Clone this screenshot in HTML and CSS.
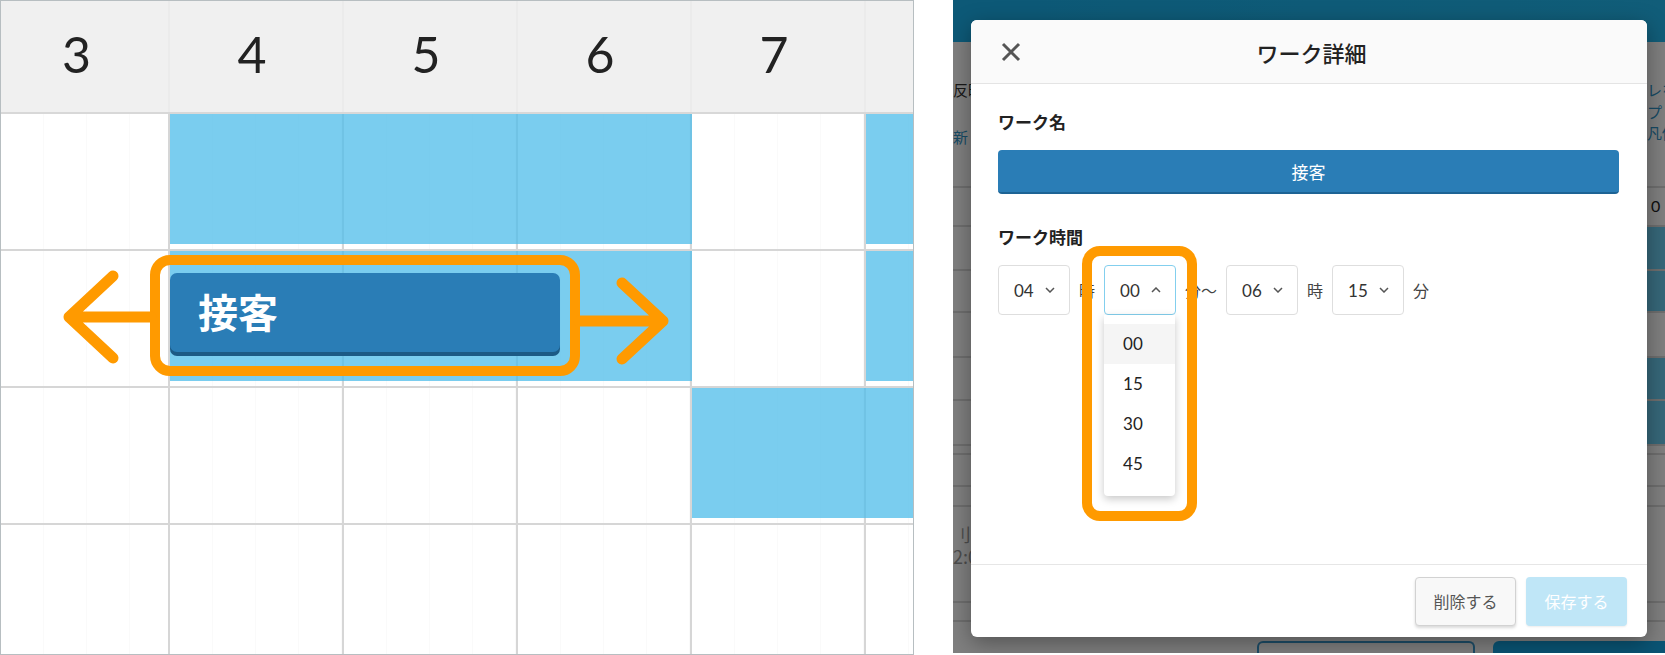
FILE: index.html
```html
<!DOCTYPE html>
<html lang="ja">
<head>
    <meta charset="utf-8" />
    <meta name="viewport" content="width=device-width, initial-scale=1" />
    <title>ワーク詳細</title>
    <link rel="stylesheet" href="styles.css">
</head>
<body>
    <div class="shot">
        <!-- left: timeline with draggable work bar -->
        <section class="timeline">
            <div class="tl-head">
                <div class="tl-hour">3</div>
                <div class="tl-hour">4</div>
                <div class="tl-hour">5</div>
                <div class="tl-hour">6</div>
                <div class="tl-hour">7</div>
                <div class="tl-hour"></div>
            </div>

            <div class="tl-row">
                <div class="cell"></div><div class="cell"></div><div class="cell"></div>
                <div class="cell"></div><div class="cell"></div><div class="cell"></div>
                <div class="shift h4-7"></div>
                <div class="shift h8"></div>
            </div>

            <div class="tl-row">
                <div class="cell"></div><div class="cell"></div><div class="cell"></div>
                <div class="cell"></div><div class="cell"></div><div class="cell"></div>
                <div class="shift h4-7">
                    <div class="work-bar">接客</div>
                </div>
                <div class="shift h8"></div>
            </div>

            <div class="tl-row">
                <div class="cell"></div><div class="cell"></div><div class="cell"></div>
                <div class="cell"></div><div class="cell"></div><div class="cell"></div>
                <div class="shift h7-9"></div>
            </div>

            <div class="tl-row">
                <div class="cell"></div><div class="cell"></div><div class="cell"></div>
                <div class="cell"></div><div class="cell"></div><div class="cell"></div>
            </div>

            <div class="callout callout-bar"></div>
            <svg class="arrows" width="912" height="653" viewBox="0 0 912 653">
                <g fill="none" stroke="#ff9a00" stroke-width="11" stroke-linecap="round" stroke-linejoin="round">
                    <path d="M150 316 H68 M112 275 L68 316 L112 357" />
                    <path d="M578 320 H662 M621 282 L662 320 L621 358" />
                </g>
            </svg>
        </section>

        <!-- right: work detail dialog -->
        <section class="dialog-shot">
            <div class="page">
                <div class="page-head"></div>
                <div class="page-intro">
                    <div class="intro-left">
                        <p class="pg-text">反映</p>
                        <p class="pg-link pg-pull">更新</p>
                    </div>
                    <div class="intro-right">
                        <p class="pg-link">レを</p>
                        <p class="pg-link">プレ</p>
                        <p class="pg-link">凡例</p>
                    </div>
                </div>
                <div class="pg-table">
                    <div class="pg-row r39"><span></span><span class="pg-num">0</span></div>
                    <div class="pg-row r44 on"><span></span><span></span></div>
                    <div class="pg-row r42 on"><span></span><span></span></div>
                    <div class="pg-row r45"><span></span><span></span></div>
                    <div class="pg-row r43 on"><span></span><span></span></div>
                    <div class="pg-row r45 on"><span></span><span></span></div>
                    <div class="pg-row r9"><span></span><span></span></div>
                    <div class="pg-row r32"><span></span><span></span></div>
                    <div class="pg-row r20"><span></span><span></span></div>
                    <div class="pg-row r96 pg-times">
                        <span>刂 :<br>2:0</span><span></span>
                    </div>
                    <div class="pg-row r19"><span></span><span></span></div>
                </div>
                <div class="pg-actions">
                    <span class="pg-btn-outline"></span>
                    <span class="pg-btn-fill"></span>
                </div>
            </div>
            <div class="backdrop"></div>

            <div class="modal">
                <header class="modal-head">
                    <button class="modal-close" aria-label="close">
                        <svg width="20" height="20" viewBox="0 0 20 20">
                            <path d="M2 2 L18 18 M18 2 L2 18" stroke="#555" stroke-width="3" />
                        </svg>
                    </button>
                    <h2 class="modal-title">ワーク詳細</h2>
                    <span></span>
                </header>

                <div class="modal-body">
                    <h3 class="field-label">ワーク名</h3>
                    <button class="work-name">接客</button>

                    <h3 class="field-label field-gap">ワーク時間</h3>
                    <div class="time-row">
                        <div class="select">
                            <span>04</span>
                            <svg width="10" height="6" viewBox="0 0 10 6"><path d="M1 1 L5 5 L9 1" fill="none" stroke="#555" stroke-width="1.5" /></svg>
                        </div>
                        <span class="unit">時</span>
                        <div class="select open">
                            <span>00</span>
                            <svg width="10" height="6" viewBox="0 0 10 6"><path d="M1 5 L5 1 L9 5" fill="none" stroke="#555" stroke-width="1.5" /></svg>
                            <ul class="menu">
                                <li class="active">00</li>
                                <li>15</li>
                                <li>30</li>
                                <li>45</li>
                            </ul>
                        </div>
                        <span class="unit">分〜</span>
                        <div class="select">
                            <span>06</span>
                            <svg width="10" height="6" viewBox="0 0 10 6"><path d="M1 1 L5 5 L9 1" fill="none" stroke="#555" stroke-width="1.5" /></svg>
                        </div>
                        <span class="unit">時</span>
                        <div class="select">
                            <span>15</span>
                            <svg width="10" height="6" viewBox="0 0 10 6"><path d="M1 1 L5 5 L9 1" fill="none" stroke="#555" stroke-width="1.5" /></svg>
                        </div>
                        <span class="unit">分</span>
                    </div>
                </div>

                <footer class="modal-foot">
                    <button class="btn btn-delete">削除する</button>
                    <button class="btn btn-save">保存する</button>
                </footer>
            </div>

            <div class="callout callout-select"></div>
        </section>
    </div>
</body>
</html>
```

FILE: styles.css
```css
* {
    margin: 0;
    padding: 0;
    box-sizing: border-box;
}

body {
    font-family: "Lato", "Noto Sans CJK JP", sans-serif;
    background: #fff;
    color: #333;
}

.shot {
    display: flex;
    width: 1665px;
    height: 655px;
}

/* ---------- timeline ---------- */

.timeline {
    position: relative;
    width: 914px;
    height: 655px;
    border: 1px solid #b7bec1;
    overflow: hidden;
    background: #fff;
}

.tl-head,
.tl-row {
    display: grid;
    grid-template-columns: 169px repeat(4, 174px) 1fr;
}

.tl-head {
    height: 113px;
    background: #f0f0f0;
    border-bottom: 2px solid #d8d8d8;
}

.tl-hour {
    display: flex;
    align-items: center;
    justify-content: center;
    padding: 0 8px 5px 0;
    font-size: 50px;
    color: #222;
    border-right: 2px solid #ebebeb;
}

.tl-hour:first-child {
    padding-right: 16px;
}

.tl-hour:last-child {
    border-right: none;
}

.tl-row {
    height: 137px;
    border-bottom: 2px solid #d6d6d6;
}

.tl-row:last-child {
    border-bottom: none;
}

.cell {
    grid-row: 1;
    border-right: 2px solid #d6d6d6;
    background: repeating-linear-gradient(90deg, transparent 0 42px, #fafafa 42px 43px);
}

.cell:nth-child(1) { grid-column: 1; }
.cell:nth-child(2) { grid-column: 2; }
.cell:nth-child(3) { grid-column: 3; }
.cell:nth-child(4) { grid-column: 4; }
.cell:nth-child(5) { grid-column: 5; }
.cell:nth-child(6) { grid-column: 6; border-right: none; }

.shift {
    grid-row: 1;
    margin-bottom: 5px;
    background: rgba(78, 188, 234, 0.75);
}

.shift.h4-7 { grid-column: 2 / 5; }
.shift.h8 { grid-column: 6 / 7; }
.shift.h7-9 { grid-column: 5 / 7; }

.work-bar {
    display: flex;
    align-items: center;
    width: 390px;
    height: 79px;
    margin-top: 22px;
    padding: 0 0 4px 28px;
    background: #2a7db6;
    border-radius: 7px;
    box-shadow: 0 4px 0 #1c5a85;
    color: #fff;
    font-size: 40px;
    font-weight: 700;
}

/* ---------- orange annotations ---------- */

.callout {
    position: absolute;
    border: 10px solid #ff9a00;
    border-radius: 20px;
    pointer-events: none;
}

.callout-bar {
    left: 149px;
    top: 254px;
    width: 430px;
    height: 121px;
}

.callout-select {
    left: 129px;
    top: 246px;
    width: 115px;
    height: 275px;
    border-radius: 18px;
}

.arrows {
    position: absolute;
    left: 0;
    top: 0;
    pointer-events: none;
}

/* ---------- dialog screenshot ---------- */

.dialog-shot {
    position: relative;
    width: 712px;
    height: 653px;
    margin-left: 39px;
    overflow: hidden;
    background: #fff;
}

.page {
    display: flex;
    flex-direction: column;
    height: 100%;
    font-family: "Noto Sans CJK JP", sans-serif;
    font-size: 15px;
}

.page-head {
    height: 42px;
    background: linear-gradient(90deg, #1ab2ee, #22bbf2);
}

.page-intro {
    display: flex;
    justify-content: space-between;
    height: 146px;
    padding-top: 38px;
    border-bottom: 2px solid #dcdcdc;
}

.intro-left p {
    line-height: 20px;
    white-space: nowrap;
}

.intro-left .pg-pull {
    margin: 27px 0 0 -15px;
}

.intro-right {
    width: 18px;
    overflow: visible;
    white-space: nowrap;
    line-height: 21.5px;
    margin-top: -1px;
}

.pg-text {
    color: #333;
}

.pg-link {
    color: #2f94c8;
}

.pg-row {
    display: grid;
    grid-template-columns: 1fr 18px;
    border-bottom: 2px solid #dcdcdc;
}

.pg-row.on span:last-child {
    background: #6ccff3;
}

.pg-num {
    padding: 8px 0 0 4px;
    color: #222;
    font-family: "Lato", sans-serif;
    font-size: 16px;
}

.pg-times span:first-child {
    padding: 16px 0 0 0;
    color: #999;
    font-size: 18px;
    line-height: 22px;
}

.r9 { height: 9px; }
.r19 { height: 19px; }
.r20 { height: 20px; }
.r32 { height: 32px; }
.r39 { height: 39px; }
.r42 { height: 42px; }
.r43 { height: 43px; }
.r44 { height: 44px; }
.r45 { height: 45px; }
.r96 { height: 96px; }

.pg-actions {
    display: flex;
    gap: 18px;
    margin-top: auto;
    padding-left: 304px;
    height: 12px;
}

.pg-btn-outline {
    width: 218px;
    border: 2px solid #3a9ad0;
    border-bottom: none;
    border-radius: 6px 6px 0 0;
    background: #fff;
}

.pg-btn-fill {
    flex: 1;
    background: #15a9e8;
    border-radius: 6px 0 0 0;
}

.backdrop {
    position: absolute;
    inset: 0;
    background: rgba(0, 0, 0, 0.5);
}

/* ---------- modal ---------- */

.modal {
    position: absolute;
    left: 18px;
    top: 20px;
    width: 676px;
    height: 617px;
    display: flex;
    flex-direction: column;
    background: #fff;
    border-radius: 6px;
    box-shadow: 0 6px 22px rgba(0, 0, 0, 0.35);
    font-family: "Lato", "Noto Sans CJK JP", sans-serif;
}

.modal-head {
    display: grid;
    grid-template-columns: 1fr auto 1fr;
    align-items: center;
    height: 64px;
    padding: 0 30px;
    background: #fafafa;
    border-bottom: 1px solid #e4e4e4;
    border-radius: 6px 6px 0 0;
}

.modal-close {
    justify-self: start;
    display: flex;
    background: none;
    border: none;
}

.modal-title {
    font-size: 22px;
    font-weight: 500;
    color: #222;
    padding-left: 5px;
}

.modal-body {
    flex: 1;
    padding: 27px 28px 0 27px;
}

.field-label {
    font-size: 17px;
    font-weight: 700;
    line-height: 24px;
    color: #222;
}

.field-gap {
    margin-top: 32px;
}

.work-name {
    display: block;
    width: 100%;
    height: 44px;
    margin-top: 15px;
    background: #2a7db6;
    border: none;
    border-bottom: 2px solid #1d6394;
    border-radius: 4px;
    color: #fff;
    font-family: "Noto Sans CJK JP", sans-serif;
    font-size: 17px;
}

.time-row {
    display: flex;
    align-items: center;
    gap: 9px;
    margin-top: 15px;
}

.select {
    position: relative;
    display: flex;
    align-items: center;
    justify-content: space-between;
    width: 72px;
    height: 50px;
    padding: 0 14px 0 15px;
    border: 1px solid #dedede;
    border-radius: 4px;
    font-size: 17px;
    color: #333;
}

.select.open {
    border-color: #83cfee;
}

.unit {
    font-family: "Noto Sans CJK JP", sans-serif;
    font-size: 16px;
    color: #444;
}

.menu {
    position: absolute;
    top: 49px;
    left: -1px;
    width: 71px;
    padding: 9px 0 12px;
    list-style: none;
    background: #fff;
    border-radius: 0 0 4px 4px;
    box-shadow: 0 3px 8px rgba(0, 0, 0, 0.22);
}

.menu li {
    height: 40px;
    line-height: 40px;
    padding-left: 19px;
    font-size: 17px;
    color: #222;
}

.menu li.active {
    background: #f5f5f5;
}

.modal-foot {
    display: flex;
    align-items: center;
    justify-content: flex-end;
    gap: 10px;
    height: 73px;
    padding-right: 20px;
    border-top: 1px solid #e6e6e6;
}

.btn {
    width: 101px;
    height: 49px;
    border-radius: 4px;
    font-family: "Noto Sans CJK JP", sans-serif;
    font-size: 16px;
}

.btn-delete {
    background: #f8f8f8;
    border: 1px solid #d2d2d2;
    box-shadow: 0 2px 3px rgba(0, 0, 0, 0.15);
    color: #555;
}

.btn-save {
    background: #bfe6f7;
    border: none;
    box-shadow: 0 1px 2px rgba(0, 0, 0, 0.08);
    color: #fff;
}
```
